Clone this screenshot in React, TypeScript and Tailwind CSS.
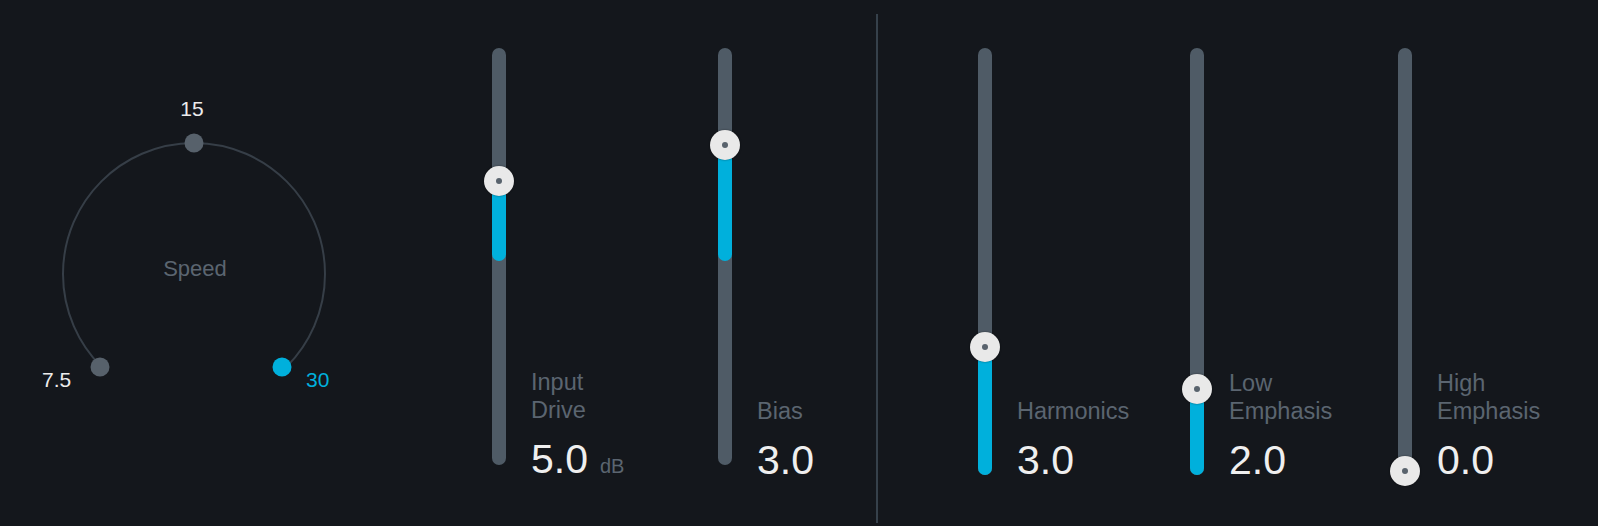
import React from 'react';

type Fader = {
  label: string[];
  value: string;
  unit?: string;
  width: number;
  trackHeight: number;
  thumb: number;
  fillTop: number;
  fillBottom: number;
};

const leftFaders: Fader[] = [
  { label: ['Input', 'Drive'], value: '5.0', unit: 'dB', width: 226, trackHeight: 417, thumb: 133, fillTop: 133, fillBottom: 213 },
  { label: ['Bias'], value: '3.0', width: 166, trackHeight: 417, thumb: 97, fillTop: 97, fillBottom: 213 },
];

const rightFaders: Fader[] = [
  { label: ['Harmonics'], value: '3.0', width: 212, trackHeight: 427, thumb: 299, fillTop: 299, fillBottom: 427 },
  { label: ['Low', 'Emphasis'], value: '2.0', width: 208, trackHeight: 427, thumb: 341, fillTop: 341, fillBottom: 427 },
  { label: ['High', 'Emphasis'], value: '0.0', width: 208, trackHeight: 427, thumb: 423, fillTop: 423, fillBottom: 423 },
];

const FaderColumn: React.FC<{ fader: Fader }> = ({ fader }) => (
  <div className="flex h-full shrink-0" style={{ width: fader.width }}>
    <div className="pt-[48px] w-[30px] shrink-0">
      <div className="relative mx-auto w-[14px] rounded-full bg-[#4f5b66]" style={{ height: fader.trackHeight }}>
        {fader.fillBottom > fader.fillTop && (
          <div
            className="absolute left-0 w-[14px] rounded-b-full bg-[#00b0dc]"
            style={{ top: fader.fillTop, height: fader.fillBottom - fader.fillTop }}
          />
        )}
        <div
          className="absolute left-1/2 -translate-x-1/2 -translate-y-1/2 w-[30px] h-[30px] rounded-full bg-[#e9e9e9] shadow-[0_0_2px_rgba(0,0,0,0.5)] flex items-center justify-center"
          style={{ top: fader.thumb }}
        >
          <div className="w-[6px] h-[6px] rounded-full bg-[#59636d]" />
        </div>
      </div>
    </div>
    <div className="ml-[17px] flex flex-col justify-end pb-[45px]">
      <div className="text-[23.5px] leading-[28px] text-[#5b6570]">
        {fader.label.map((l) => (
          <div key={l}>{l}</div>
        ))}
      </div>
      <div className="mt-[15px] flex items-baseline">
        <span className="text-[41px] leading-[41px] text-[#efefef]">{fader.value}</span>
        {fader.unit && <span className="ml-[12px] text-[20px] text-[#5b6570]">{fader.unit}</span>}
      </div>
    </div>
  </div>
);

const SpeedKnob: React.FC = () => (
  <div className="w-[484px] shrink-0 pl-[34px] pt-[84px]">
    <div className="relative w-[320px] h-[320px]">
      <svg width="320" height="320" viewBox="0 0 320 320" className="absolute inset-0">
        <path d="M 67.37 282.63 A 131 131 0 1 1 252.63 282.63" fill="none" stroke="#363e47" strokeWidth="2" />
        <circle cx="160" cy="59" r="9.5" fill="#57616b" />
        <circle cx="66" cy="283" r="9.5" fill="#57616b" />
        <circle cx="248" cy="283" r="9.5" fill="#00b0dc" />
      </svg>
      <span className="absolute left-[158px] top-[14px] -translate-x-1/2 text-[21px] leading-[21px] text-[#ececec]">15</span>
      <span className="absolute left-[161px] top-[174px] -translate-x-1/2 text-[22px] leading-[22px] text-[#5b6570]">Speed</span>
      <span className="absolute left-[8px] top-[285px] text-[21px] leading-[21px] text-[#ececec]">7.5</span>
      <span className="absolute left-[272px] top-[285px] text-[21px] leading-[21px] text-[#00b0dc]">30</span>
    </div>
  </div>
);

export default function App() {
  return (
    <div className="w-full h-[526px] overflow-hidden bg-[#14171c] flex font-['Liberation_Sans',Arial,sans-serif]">
      <SpeedKnob />
      {leftFaders.map((f) => (
        <FaderColumn key={f.label.join(' ')} fader={f} />
      ))}
      <div className="w-[2px] shrink-0 mt-[14px] h-[509px] bg-[#36414b]" />
      <div className="w-[92px] shrink-0" />
      {rightFaders.map((f) => (
        <FaderColumn key={f.label.join(' ')} fader={f} />
      ))}
    </div>
  );
}
